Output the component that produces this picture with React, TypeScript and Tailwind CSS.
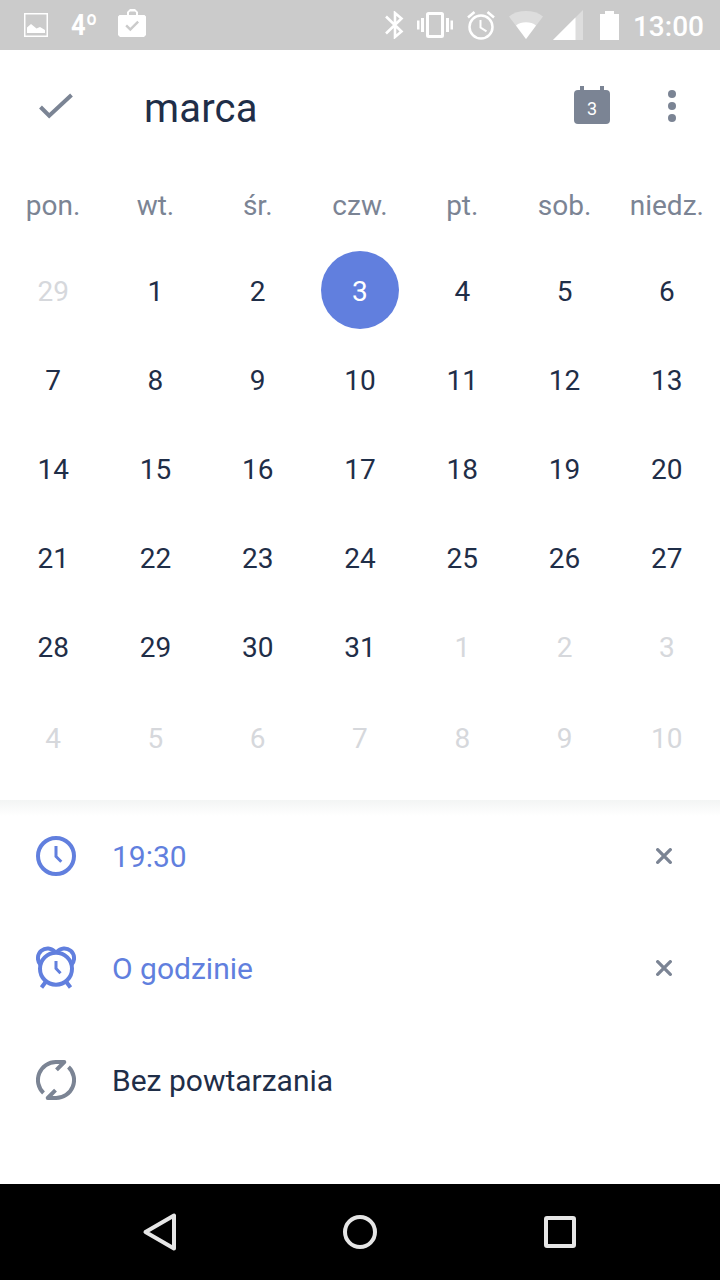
import { useState } from "react";
import type { ReactNode } from "react";

const WEEKDAYS = ["pon.", "wt.", "śr.", "czw.", "pt.", "sob.", "niedz."];

type Day = { label: number; inMonth: boolean };

// February 29 leads the grid, the first days of April close it
const DAYS: Day[] = [
  { label: 29, inMonth: false },
  ...Array.from({ length: 31 }, (_, i) => ({ label: i + 1, inMonth: true })),
  ...Array.from({ length: 10 }, (_, i) => ({ label: i + 1, inMonth: false })),
];

export default function App() {
  const [selected, setSelected] = useState(3);
  const [time, setTime] = useState<string | null>("19:30");
  const [reminder, setReminder] = useState<string | null>("O godzinie");

  return (
    <div className="flex h-[1280px] w-[720px] flex-col overflow-hidden bg-white font-[Roboto,sans-serif] text-[#1f2e48]">
      <StatusBar />
      <Header day={selected} />
      <Calendar selected={selected} onSelect={setSelected} />
      <main className="flex-1 bg-linear-to-b from-[#f3f5f4] to-white to-[16px]">
        <OptionRow icon={<ClockIcon />} active={time != null} onClear={() => setTime(null)}>
          {time ?? "Dodaj godzinę"}
        </OptionRow>
        <OptionRow icon={<AlarmIcon />} active={reminder != null} onClear={() => setReminder(null)}>
          {reminder ?? "Bez przypomnienia"}
        </OptionRow>
        <OptionRow icon={<RepeatIcon />}>Bez powtarzania</OptionRow>
      </main>
      <NavBar />
    </div>
  );
}

function StatusBar() {
  return (
    <div className="flex h-[50px] shrink-0 items-center bg-[#cbcbcb] pr-4 pl-6 text-white">
      <svg width="24" height="24" viewBox="0 0 24 24" className="shrink-0">
        <rect x="0.75" y="0.75" width="22.5" height="22.5" fill="none" stroke="currentColor" strokeWidth="1.5" />
        <path d="M3 20v-5.500l4-3.500 5.500 4.500 3.500-1.500 5 3v3z" fill="currentColor" />
      </svg>
      <span className="ml-[23px] w-[47px] origin-left scale-x-[0.85] text-[30px] leading-[50px] font-bold">4º</span>
      <svg width="28" height="28" viewBox="0 0 28 28" className="-mt-1 shrink-0">
        <path
          fillRule="evenodd"
          fill="currentColor"
          d="M9 6V3l3-3h5l3 3v3h6.500L28 7.500v18.500l-2 2H2l-2-2V7.500L1.500 6zM11 6h7V3.500L17 2.500h-5l-1 1zM7.300 17.300l5 5L21 13.500l-1.700-1.700-7 7-3.300-3.200z"
        />
      </svg>
      <div className="ml-auto flex items-center">
        <svg width="20" height="28" viewBox="0 0 20 28" fill="none" stroke="currentColor" strokeWidth="2.600">
          <path d="M2 5.500L17.500 20.500L11 26V2L17.500 7.500L2 22.500" />
        </svg>
        <svg width="36" height="26" viewBox="0 0 36 26" className="ml-[13px]" fill="currentColor">
          <rect x="10.500" y="1.500" width="15" height="23" rx="1" fill="none" stroke="currentColor" strokeWidth="3" />
          <path d="M0 8.500h2.500v9H0zM4 6h3v14H4zM29 6h3v14h-3zM33.500 8.500H36v9h-2.500z" />
        </svg>
        <svg width="28" height="29" viewBox="0 0 28 29" className="ml-[14px]" fill="none" stroke="currentColor">
          <circle cx="14" cy="16" r="11.500" strokeWidth="2.500" />
          <path d="M13.500 9v7.500l6 3.800" strokeWidth="2" />
          <path d="M1 6.500l6.500-5.500M27 6.500l-6.500-5.500" strokeWidth="2.600" />
        </svg>
        <svg width="34" height="28" viewBox="0 0 34 28" className="ml-[14px]" fill="currentColor">
          <path d="M17 28L0 5.500C9-1.800 25-1.800 34 5.500z" opacity="0.35" />
          <path d="M17 28L7 14.500c5-4.300 15-4.300 20 0z" />
        </svg>
        <svg width="30" height="30" viewBox="0 0 30 30" className="ml-[10px]" fill="currentColor">
          <path d="M0 30L30 0V30z" opacity="0.35" />
          <path d="M0 30L22.500 7.500V30z" />
        </svg>
        <svg width="19" height="29" viewBox="0 0 19 29" className="ml-[17px]" fill="currentColor">
          <path d="M5 0h9v3h5v26H0V3h5z" />
        </svg>
        <span className="ml-[14px] pt-[3px] text-[28px] leading-[46px] font-medium">13:00</span>
      </div>
    </div>
  );
}

function Header({ day }: { day: number }) {
  return (
    <header className="flex h-28 shrink-0 items-center pr-11 pl-9">
      <button aria-label="Gotowe">
        <svg width="40" height="40" viewBox="0 0 40 40" fill="none" stroke="#7b8494" strokeWidth="4">
          <path d="M4.500 21l8.700 8.700L35.500 9" />
        </svg>
      </button>
      <h1 className="ml-[68px] pt-1.5 text-[40px] leading-[48px] tracking-[0.2px]">marca</h1>
      <button
        aria-label="Dzisiaj"
        className="relative mt-0.5 ml-auto flex h-[34px] w-9 items-center justify-center rounded bg-[#7b8494] pt-1 text-lg text-white"
      >
        {/* binder rings sticking out above the sheet */}
        <span className="absolute -top-1 left-1.5 h-1 w-1 bg-[#7b8494]" />
        <span className="absolute -top-1 right-1.5 h-1 w-1 bg-[#7b8494]" />
        {day}
      </button>
      <button aria-label="Więcej" className="ml-[58px] flex flex-col gap-1">
        <span className="h-2 w-2 rounded-full bg-[#7b8494]" />
        <span className="h-2 w-2 rounded-full bg-[#7b8494]" />
        <span className="h-2 w-2 rounded-full bg-[#7b8494]" />
      </button>
    </header>
  );
}

function Calendar({ selected, onSelect }: { selected: number; onSelect: (day: number) => void }) {
  return (
    <section className="h-[638px] shrink-0 px-0.5 text-[28px]">
      <div className="grid h-[83px] grid-cols-7 items-center pb-px text-center text-[#7b8494]">
        {WEEKDAYS.map((name) => (
          <span key={name} className="whitespace-nowrap pt-1.5">
            {name}
          </span>
        ))}
      </div>
      <div className="grid auto-rows-[89px] grid-cols-7 justify-items-center">
        {DAYS.map(({ label, inMonth }, i) => (
          <button
            key={i}
            disabled={!inMonth}
            onClick={() => onSelect(label)}
            className={`mt-1.5 flex h-[78px] w-[78px] items-center justify-center rounded-full pt-1 ${
              !inMonth ? "text-[#d6d8dc]" : label === selected ? "bg-[#617fde] text-white" : ""
            } ${i >= 35 ? "translate-y-0.5" : ""}`}
          >
            {label}
          </button>
        ))}
      </div>
    </section>
  );
}

function OptionRow({
  icon,
  active = false,
  onClear,
  children,
}: {
  icon: ReactNode;
  active?: boolean;
  onClear?: () => void;
  children: ReactNode;
}) {
  return (
    <div className={`flex h-28 items-center pr-12 pl-9 text-[30px] ${active ? "text-[#617fde]" : ""}`}>
      {icon}
      <span className="ml-9">{children}</span>
      {active && (
        <button aria-label="Usuń" onClick={onClear} className="ml-auto">
          <svg width="16" height="16" viewBox="0 0 16 16" stroke="#7b8494" strokeWidth="3.300" strokeLinecap="round">
            <path d="M1.700 1.700l12.600 12.600M14.300 1.700L1.700 14.300" />
          </svg>
        </button>
      )}
    </div>
  );
}

function ClockIcon() {
  return (
    <svg width="40" height="40" viewBox="0 0 40 40" fill="none" stroke="currentColor">
      <circle cx="20" cy="20" r="18" strokeWidth="4" />
      <path d="M20 10v10.500l5.300 5.300" strokeWidth="3" />
    </svg>
  );
}

function AlarmIcon() {
  return (
    <svg width="40" height="44" viewBox="0 0 40 44" fill="none" stroke="currentColor" strokeWidth="4">
      <circle cx="20" cy="22.700" r="16" />
      <path d="M4.300 18.500A9 9 0 0 1 19 5.800M35.700 18.500A9 9 0 0 0 21 5.800" />
      <path d="M10 35.500l-4.500 6M30 35.500l4.500 6" />
      <path d="M20 15v7.500l4.500 4.800" strokeWidth="3" />
    </svg>
  );
}

function RepeatIcon() {
  return (
    <svg width="40" height="40" viewBox="0 0 40 40" fill="none" stroke="#7b8494" strokeWidth="4" strokeLinejoin="round">
      <path d="M7.500 33A18 18 0 0 1 20 2h8.300L20.500 9.800" />
      <path d="M32.500 7A18 18 0 0 1 20 38h-8.300L19.500 30.200" />
    </svg>
  );
}

function NavBar() {
  return (
    <nav className="flex h-24 shrink-0 items-center justify-center bg-black text-[#e6e6e6]">
      <button aria-label="Wstecz" className="flex w-[200px] justify-center">
        <svg width="40" height="40" viewBox="0 0 40 40" fill="none" stroke="currentColor" strokeWidth="4" strokeLinejoin="round">
          <path d="M5.500 20L34 3.500v33z" />
        </svg>
      </button>
      <button aria-label="Ekran główny" className="flex w-[200px] justify-center">
        <span className="h-[34px] w-[34px] rounded-full border-4 border-current" />
      </button>
      <button aria-label="Ostatnie" className="flex w-[200px] justify-center">
        <span className="h-8 w-8 rounded-[3px] border-4 border-current" />
      </button>
    </nav>
  );
}
